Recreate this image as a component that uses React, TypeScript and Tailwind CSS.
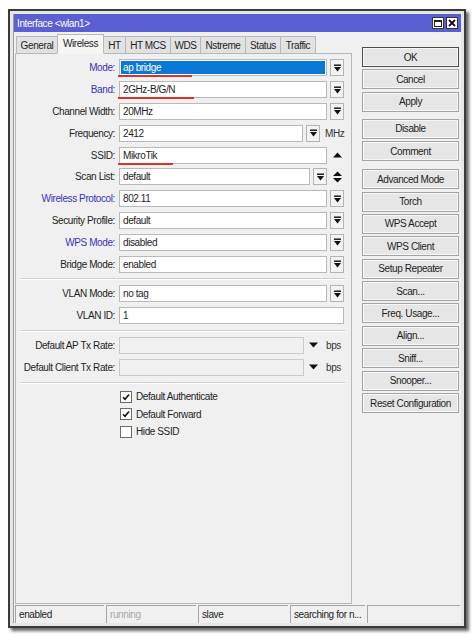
import React from "react"

type RowProps = { label: string; blue?: boolean; children: React.ReactNode }

function DropBtn() {
  return (
    <div className="w-[14px] h-[17px] border border-[#b4b4b4] bg-[#f3f3f3] flex items-center justify-center shrink-0">
      <svg width="7" height="8" viewBox="0 0 7 8">
        <rect x="0" y="0.5" width="7" height="1.4" fill="#111" />
        <path d="M0 3h7L3.5 7.5z" fill="#111" />
      </svg>
    </div>
  )
}

function Field({ w, children, selected }: { w: string; children?: React.ReactNode; selected?: boolean }) {
  return (
    <div
      className={`${w} h-[17px] border border-[#b9b9b9] pl-[3px] flex items-center shrink-0 whitespace-nowrap overflow-hidden ${
        selected ? "bg-[#0a78d7] text-white shadow-[inset_0_0_0_1px_#ffffff]" : "bg-white"
      }`}
    >
      {children}
    </div>
  )
}

function Row({ label, blue, children }: RowProps) {
  return (
    <div className="flex items-center h-[21.8px]">
      <div className={`w-[99px] text-right whitespace-nowrap ${blue ? "text-[#3434c4]" : "text-[#1e1e1e]"}`}>{label}:</div>
      <div className="ml-[4px] w-[225px] flex items-center relative">{children}</div>
    </div>
  )
}

function Sep({ h }: { h: string }) {
  return (
    <div className={`${h} flex items-center pl-[5px] pr-[6px]`}>
      <div className="w-full border-t border-[#cdcdcd] border-b border-b-white" />
    </div>
  )
}

function Check({ label, checked }: { label: string; checked?: boolean }) {
  return (
    <div className="h-[17.5px] flex items-center pl-[104px]">
      <div className="w-[12px] h-[12px] border border-[#6b6b6b] bg-white flex items-center justify-center">
        {checked && (
          <svg width="8" height="8" viewBox="0 0 8 8">
            <path d="M1 4.2l2 2L7 1.5" stroke="#111" strokeWidth="1.6" fill="none" />
          </svg>
        )}
      </div>
      <span className="ml-[4px]">{label}</span>
    </div>
  )
}

function Btn({ label, def }: { label: string; def?: boolean }) {
  return (
    <div
      className={`h-[20px] flex items-center justify-center bg-[#e6e6e6] shadow-[inset_0_0_0_1px_#f7f7f7] border whitespace-nowrap ${
        def ? "border-[#4d4d4d]" : "border-[#a3a3a3]"
      }`}
    >
      {label}
    </div>
  )
}

const tabs = [
  { name: "General", w: "w-[42px]" },
  { name: "Wireless", w: "w-[47px]", active: true },
  { name: "HT", w: "w-[23px]" },
  { name: "HT MCS", w: "w-[46px]" },
  { name: "WDS", w: "w-[31px]" },
  { name: "Nstreme", w: "w-[46px]" },
  { name: "Status", w: "w-[36px]" },
  { name: "Traffic", w: "w-[36px]" },
]

const Red = ({ w, top }: { w: string; top: string }) => (
  <span className={`absolute left-[-1px] ${top} ${w} h-[2px] bg-[#d8322e]`} />
)

export default function App() {
  return (
    <div className="w-[474px] h-[637px] bg-white pt-[9px] pl-[8px] font-['Liberation_Sans',Arial,sans-serif] text-[10px] tracking-[-0.4px] text-[#1e1e1e]">
      <div className="w-[458px] h-[619px] border-2 border-[#3a3a3a] bg-[#e6e6e6] p-[3px] shadow-[3px_3px_3px_rgba(0,0,0,0.6)]">
        <div className="h-full flex flex-col bg-[#f0f0f0] border-l border-[#9c9c9c]">
          {/* title bar */}
          <div className="h-[18px] bg-[#5a5fd3] flex items-center pl-[3px] pr-[3px] text-white">
            <span className="flex-1">Interface &lt;wlan1&gt;</span>
            <div className="flex gap-[2px]">
              <div className="w-[12px] h-[12px] bg-white border border-[#333] flex items-center justify-center">
                <div className="w-[8px] h-[7px] border border-[#222] border-t-2" />
              </div>
              <div className="w-[12px] h-[12px] bg-white border border-[#333] flex items-center justify-center">
                <svg width="8" height="8" viewBox="0 0 8 8">
                  <path d="M1 1l6 6M7 1l-6 6" stroke="#111" strokeWidth="1.8" />
                </svg>
              </div>
            </div>
          </div>

          <div className="flex">
            {/* left column */}
            <div className="ml-[1px] w-[337px] flex flex-col">
              <div className="h-[21px] flex items-end pl-[1px] relative z-10">
                {tabs.map((t) => (
                  <div
                    key={t.name}
                    className={`${t.w} flex items-center justify-center border border-[#b8b8b8] -ml-px first:ml-0 whitespace-nowrap ${
                      t.active ? "h-[20px] bg-[#f6f6f6] border-b-[#f6f6f6] -mb-px pb-[2px]" : "h-[17px] bg-[#e2e2e2] border-b-0"
                    }`}
                  >
                    {t.name}
                  </div>
                ))}
              </div>
              <div className="h-[551px] border border-[#b8b8b8] bg-[#f0f0f0] pt-[3px]">
                <Row label="Mode" blue>
                  <Field w="w-[208px]" selected>ap bridge</Field>
                  <Red w="w-[74px]" top="top-[16px]" />
                  <div className="ml-[3px]"><DropBtn /></div>
                </Row>
                <Row label="Band" blue>
                  <Field w="w-[208px]">2GHz-B/G/N</Field>
                  <Red w="w-[76px]" top="top-[16px]" />
                  <div className="ml-[3px]"><DropBtn /></div>
                </Row>
                <Row label="Channel Width">
                  <Field w="w-[208px]">20MHz</Field>
                  <div className="ml-[3px]"><DropBtn /></div>
                </Row>
                <Row label="Frequency">
                  <Field w="w-[184px]">2412</Field>
                  <div className="ml-[3px]"><DropBtn /></div>
                  <span className="ml-[5px] text-[#333]">MHz</span>
                </Row>
                <Row label="SSID">
                  <Field w="w-[208px]">MikroTik</Field>
                  <Red w="w-[55px]" top="top-[16px]" />
                  <div className="w-[17px] flex justify-center pl-[3px]">
                    <svg width="9" height="6" viewBox="0 0 9 6"><path d="M0 5.5h9L4.5 0.5z" fill="#111" /></svg>
                  </div>
                </Row>
                <Row label="Scan List">
                  <Field w="w-[191px]">default</Field>
                  <div className="ml-[3px]"><DropBtn /></div>
                  <div className="w-[17px] flex justify-center pl-[3px]">
                    <svg width="9" height="12" viewBox="0 0 9 12">
                      <path d="M0 5h9L4.5 0.5z" fill="#111" />
                      <path d="M0 7h9L4.5 11.5z" fill="#111" />
                    </svg>
                  </div>
                </Row>
                <Row label="Wireless Protocol" blue>
                  <Field w="w-[208px]">802.11</Field>
                  <div className="ml-[3px]"><DropBtn /></div>
                </Row>
                <Row label="Security Profile">
                  <Field w="w-[208px]">default</Field>
                  <div className="ml-[3px]"><DropBtn /></div>
                </Row>
                <Row label="WPS Mode" blue>
                  <Field w="w-[208px]">disabled</Field>
                  <div className="ml-[3px]"><DropBtn /></div>
                </Row>
                <Row label="Bridge Mode">
                  <Field w="w-[208px]">enabled</Field>
                  <div className="ml-[3px]"><DropBtn /></div>
                </Row>
                <Sep h="h-[8px]" />
                <Row label="VLAN Mode">
                  <Field w="w-[208px]">no tag</Field>
                  <div className="ml-[3px]"><DropBtn /></div>
                </Row>
                <Row label="VLAN ID">
                  <Field w="w-[225px]">1</Field>
                </Row>
                <Sep h="h-[8px]" />
                {["Default AP Tx Rate", "Default Client Tx Rate"].map((l) => (
                  <Row key={l} label={l}>
                    <div className="w-[185px] h-[17px] border border-[#cacaca] bg-[#f0f0f0]" />
                    <div className="w-[18px] flex justify-center">
                      <svg width="9" height="6" viewBox="0 0 9 6"><path d="M0 0.5h9L4.5 5.5z" fill="#111" /></svg>
                    </div>
                    <span className="ml-[4px] text-[#333]">bps</span>
                  </Row>
                ))}
                <Sep h="h-[10px]" />
                <Check label="Default Authenticate" checked />
                <Check label="Default Forward" checked />
                <Check label="Hide SSID" />
              </div>
            </div>

            {/* right column */}
            <div className="ml-[10px] w-[97px] pt-[15px] flex flex-col gap-[2.4px]">
              <Btn label="OK" def />
              <Btn label="Cancel" />
              <Btn label="Apply" />
              <div className="h-[2.2px]" />
              <Btn label="Disable" />
              <Btn label="Comment" />
              <div className="h-[3.2px]" />
              <Btn label="Advanced Mode" />
              <Btn label="Torch" />
              <Btn label="WPS Accept" />
              <Btn label="WPS Client" />
              <Btn label="Setup Repeater" />
              <Btn label="Scan..." />
              <Btn label="Freq. Usage..." />
              <Btn label="Align..." />
              <Btn label="Sniff..." />
              <Btn label="Snooper..." />
              <Btn label="Reset Configuration" />
            </div>
          </div>

          {/* status bar */}
          <div className="mt-[1px] h-[18px] flex ml-[1px]">
            {[
              { t: "enabled", w: "w-[89px]" },
              { t: "running", w: "w-[90px]", dim: true },
              { t: "slave", w: "w-[90px]" },
              { t: "searching for n...", w: "w-[75px]" },
              { t: "", w: "w-[93px]" },
            ].map((c, i) => (
              <div
                key={i}
                className={`${c.w} h-full border-t border-l border-[#a6a6a6] mr-[2px] last:mr-0 pl-[3px] flex items-center whitespace-nowrap overflow-hidden ${
                  c.dim ? "text-[#a8a8a8]" : ""
                }`}
              >
                {c.t}
              </div>
            ))}
          </div>
        </div>
      </div>
    </div>
  )
}
